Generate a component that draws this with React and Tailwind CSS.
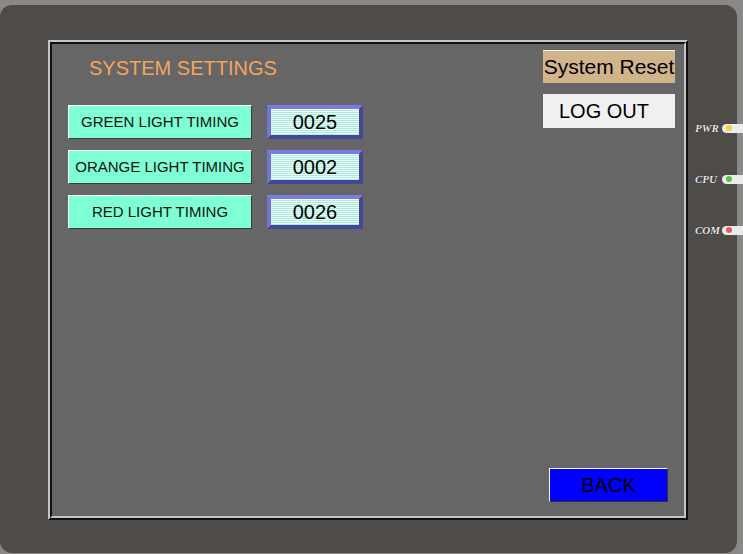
// App.jsx — HMI panel: system settings screen

const rows = [
  { label: "GREEN LIGHT TIMING", value: "0025" },
  { label: "ORANGE LIGHT TIMING", value: "0002" },
  { label: "RED LIGHT TIMING", value: "0026" },
];

const leds = [
  { name: "PWR", dot: "bg-[#f2d43a]" },
  { name: "CPU", dot: "bg-[#5cc23c]" },
  { name: "COM", dot: "bg-[#e85a5a]" },
];

function Led({ name, dot }) {
  return (
    <div className="flex items-center h-[10px]">
      <span className="w-[26px] font-['Liberation_Serif',serif] italic font-bold text-[11px] leading-none text-[#e6e6e6] [text-shadow:0_0_1px_#000]">
        {name}
      </span>
      <span className="ml-[1px] flex items-center w-[24px] h-[9px] rounded-l-full bg-[#ececec] pl-[4px]">
        <span className={`w-[6px] h-[6px] rounded-full ${dot}`} />
      </span>
    </div>
  );
}

export default function App() {
  return (
    <div className="w-[743px] h-[554px] overflow-hidden bg-[#8a8886] pt-[5px] pr-[6px] font-['Liberation_Sans',Arial,sans-serif]">
      <div className="flex h-[548px] rounded-[12px] bg-[#4f4b49] pl-[48px] pt-[35px]">
        {/* screen frame */}
        <div className="shrink-0 w-[640px] h-[480px] border-2 border-t-[#c4c4c4] border-l-[#c4c4c4] border-b-[#111] border-r-[#111]">
          <div className="flex flex-col h-full border-2 border-t-[#111] border-l-[#111] border-b-[#c4c4c4] border-r-[#c4c4c4] bg-[#666666]">
            <div className="flex">
              <div className="pl-[16px] pt-[13px]">
                <h1 className="ml-[21px] text-[20px] leading-[23px] text-[#f4a55c]">SYSTEM SETTINGS</h1>
                <div className="mt-[25px] flex flex-col gap-[11px]">
                  {rows.map((r) => (
                    <div key={r.label} className="flex gap-[15px]">
                      <div className="w-[184px] h-[34px] flex items-center justify-center bg-[#7fffd4] border border-t-white border-l-white border-b-[#3c3c3c] border-r-[#3c3c3c] text-[15px] text-[#111] whitespace-nowrap">
                        {r.label}
                      </div>
                      <div className="w-[96px] h-[34px] border-[4px] border-t-[#7c7ce0] border-l-[#7373d6] border-b-[#45459a] border-r-[#45459a]">
                        <div className="h-full flex items-center justify-center bg-[repeating-linear-gradient(to_bottom,#f2fffb_0px,#f2fffb_1px,#a6efdd_1px,#a6efdd_2px)] text-[20px] leading-none text-black">
                          {r.value}
                        </div>
                      </div>
                    </div>
                  ))}
                </div>
              </div>
              <div className="ml-auto pr-[9px] pt-[6px] flex flex-col gap-[11px]">
                <div className="w-[132px] h-[33px] flex items-center justify-center bg-[#d2b48c] border-t border-t-[#f4f4f4] text-[21px] text-black whitespace-nowrap">
                  System Reset
                </div>
                <div className="w-[132px] h-[34px] flex items-center justify-center pr-[10px] bg-[#f0f0f0] text-[20px] text-black">
                  LOG OUT
                </div>
              </div>
            </div>
            <div className="mt-auto pb-[14px] pr-[16px] flex justify-end">
              <div className="w-[119px] h-[34px] flex items-center justify-center bg-[#0000ff] border border-t-white border-l-white border-b-[#333] border-r-[#333] text-[20px] text-black">
                BACK
              </div>
            </div>
          </div>
        </div>
        {/* status LEDs */}
        <div className="shrink-0 ml-[7px] pt-[83px] flex flex-col gap-[41px]">
          {leds.map((l) => (
            <Led key={l.name} {...l} />
          ))}
        </div>
      </div>
    </div>
  );
}
